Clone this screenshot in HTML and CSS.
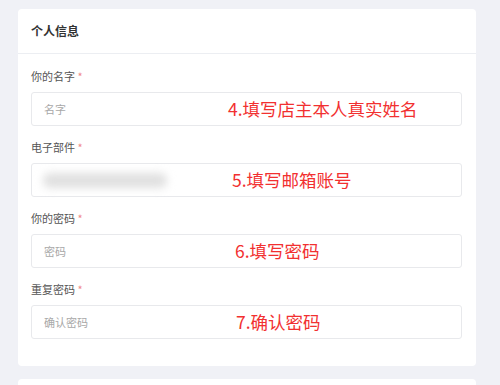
FILE: index.html
```html
<!DOCTYPE html>
<html lang="zh-CN">
<head>
<meta charset="UTF-8">
<meta name="viewport" content="width=device-width, initial-scale=1.0">
<title>个人信息</title>
<link rel="stylesheet" href="styles.css">
</head>
<body>
<div class="card">
  <div class="card-header">个人信息</div>
  <div class="card-body">
    <!-- 名字 -->
    <div class="field">
      <label class="field-label">你的名字 <span class="req">*</span></label>
      <div class="input-box">
        <input type="text" placeholder="名字">
        <span class="note note-1">4.填写店主本人真实姓名</span>
      </div>
    </div>
    <!-- 邮箱 -->
    <div class="field">
      <label class="field-label">电子部件 <span class="req">*</span></label>
      <div class="input-box">
        <div class="blurred"></div>
        <span class="note note-2">5.填写邮箱账号</span>
      </div>
    </div>
    <!-- 密码 -->
    <div class="field">
      <label class="field-label">你的密码 <span class="req">*</span></label>
      <div class="input-box">
        <input type="password" placeholder="密码">
        <span class="note note-3">6.填写密码</span>
      </div>
    </div>
    <!-- 重复密码 -->
    <div class="field">
      <label class="field-label">重复密码 <span class="req">*</span></label>
      <div class="input-box">
        <input type="password" placeholder="确认密码">
        <span class="note note-4">7.确认密码</span>
      </div>
    </div>
  </div>
</div>
<div class="card card-next"></div>
</body>
</html>
```

FILE: styles.css
```css
/* Page */
body {
  margin: 9px 24px 0 18px;
  background-color: #f0f1f6;
  font-family: "Noto Sans CJK SC", "Noto Sans", sans-serif;
  color: #444;
}

/* Card */
.card {
  background-color: #fff;
  border-radius: 4px;
  margin-bottom: 13px;
}

.card-header {
  height: 44px;
  line-height: 44px;
  padding: 0 13px;
  font-size: 12px;
  font-weight: bold;
  color: #333;
  border-bottom: 1px solid #eceef2;
}

.card-body {
  display: flex;
  flex-direction: column;
  gap: 13px;
  padding: 14px 14px 27px 13px;
}

.card-next {
  height: 6px;
  margin-bottom: 0;
  border-radius: 4px 4px 0 0;
}

/* Form fields */
.field-label {
  display: block;
  font-size: 11px;
  line-height: 16px;
  color: #555;
  margin-bottom: 8px;
}

.req {
  color: #f08a8a;
}

.input-box {
  position: relative;
  height: 34px;
  border: 1px solid #e8e9ec;
  border-radius: 3px;
  box-sizing: border-box;
  display: flex;
  align-items: center;
}

.input-box input {
  width: 100%;
  height: 100%;
  border: none;
  outline: none;
  background: transparent;
  padding: 0 12px;
  font-family: inherit;
  font-size: 11px;
  color: #444;
}

.input-box input::placeholder {
  color: #a8a8a8;
}

/* blurred e-mail value */
.blurred {
  width: 124px;
  height: 15px;
  margin-left: 11px;
  border-radius: 7px;
  background-color: #e0e0e0;
  filter: blur(4px);
}

/* red annotations over the inputs */
.note {
  position: absolute;
  top: 50%;
  transform: translateY(-50%);
  font-size: 17.5px;
  line-height: 20px;
  color: #f23030;
  white-space: nowrap;
}

.note-1 { left: 196px; }
.note-2 { left: 200px; }
.note-3 { left: 203px; }
.note-4 { left: 204px; }
```
